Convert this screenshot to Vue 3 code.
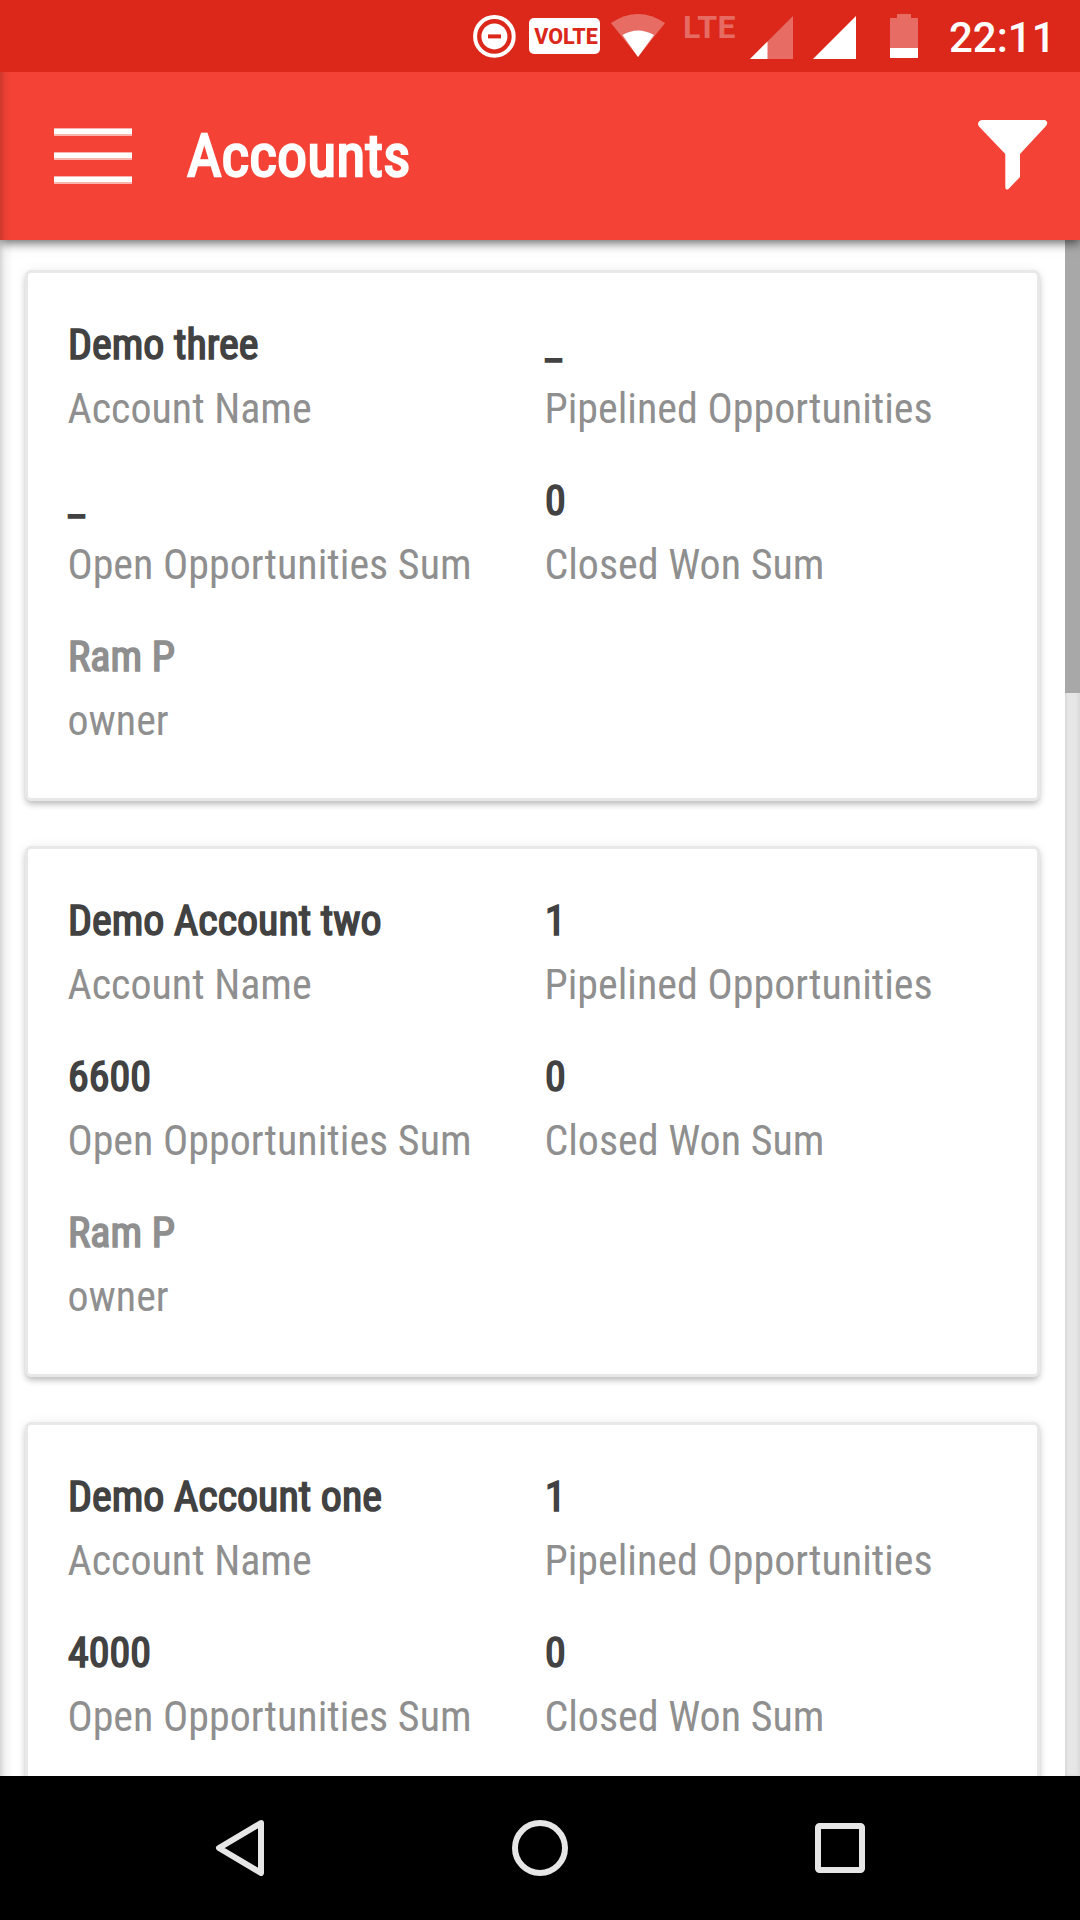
<script setup>
import { ref } from 'vue';

const accounts = ref([
    { name: 'Demo three', pipelined: '_', open: '_', closedWon: '0', owner: 'Ram P' },
    { name: 'Demo Account two', pipelined: '1', open: '6600', closedWon: '0', owner: 'Ram P' },
    { name: 'Demo Account one', pipelined: '1', open: '4000', closedWon: '0' }
]);

const fields = [
    { key: 'name', label: 'Account Name' },
    { key: 'pipelined', label: 'Pipelined Opportunities' },
    { key: 'open', label: 'Open Opportunities Sum' },
    { key: 'closedWon', label: 'Closed Won Sum' },
    { key: 'owner', label: 'owner' }
];

const fieldsOf = (account) => fields.filter((field) => field.key in account);
</script>

<template>
    <div class="screen">
        <div class="status-bar">
            <svg class="dnd" width="44" height="44" viewBox="0 0 44 44">
                <circle cx="22.400" cy="22.400" r="19.300" fill="none" stroke="#fff" stroke-width="4" />
                <circle cx="22.400" cy="22.400" r="13" fill="#fff" />
                <rect x="16" y="20.400" width="13" height="4" fill="#dc281b" />
            </svg>
            <span class="volte">VOLTE</span>
            <svg class="wifi" width="54" height="44" viewBox="0 0 54 44">
                <path d="M0 10Q27 -8 54 10L27 44Z" fill="#fff" fill-opacity=".32" />
                <path d="M11.500 22Q27 13 43 22L27 44Z" fill="#fff" />
            </svg>
            <span class="lte">LTE</span>
            <svg class="signal" width="43" height="43" viewBox="0 0 43 43">
                <path d="M0 43L43 0V43Z" fill="#fff" fill-opacity=".32" />
                <path d="M0 43L17.500 25.500V43Z" fill="#fff" />
            </svg>
            <svg class="signal full" width="43" height="43" viewBox="0 0 43 43">
                <path d="M0 43L43 0V43Z" fill="#fff" />
            </svg>
            <svg class="battery" width="28" height="44" viewBox="0 0 28 44">
                <path d="M0 4H7V0H21V4H28V34H0Z" fill="#fff" fill-opacity=".32" />
                <path d="M0 34H28V44H0Z" fill="#fff" />
            </svg>
            <span class="clock">22:11</span>
        </div>

        <div class="app">
            <header class="toolbar">
                <div class="menu">
                    <i></i>
                    <i></i>
                    <i></i>
                </div>
                <h1>Accounts</h1>
                <svg class="filter" width="70" height="70" viewBox="0 0 70 70">
                    <path d="M4 0H66Q69.500 .5 69.200 3.500Q69 5 67.500 6.500L42 34V57L31 68.500Q30 69.700 28.500 69.500Q27.300 69 27.300 67V34L1.500 7Q0 5.500 0 3.500Q.5 .5 4 0Z" fill="#fff" />
                </svg>
            </header>

            <main class="content">
                <div class="list">
                    <section v-for="account in accounts" :key="account.name" class="card">
                        <div v-for="field in fieldsOf(account)" :key="field.key" class="field" :class="field.key">
                            <div class="value">{{ account[field.key] }}</div>
                            <div class="label">{{ field.label }}</div>
                        </div>
                    </section>
                </div>
                <div class="scrollbar">
                    <div class="thumb"></div>
                </div>
            </main>
            <div class="edge-shadow"></div>
        </div>

        <nav class="nav-bar">
            <svg width="56" height="56" viewBox="0 0 56 56">
                <path d="M49 3L7 28L49 53Z" />
            </svg>
            <svg width="56" height="56" viewBox="0 0 56 56">
                <circle cx="28" cy="28" r="25" />
            </svg>
            <svg width="56" height="56" viewBox="0 0 56 56">
                <rect x="6" y="6" width="44" height="44" rx="1.500" />
            </svg>
        </nav>
    </div>
</template>

<style>
body {
    margin: 0;
    overflow: hidden;
}
</style>

<style scoped>
.screen {
    width: 1080px;
    height: 1920px;
    display: flex;
    flex-direction: column;
    overflow: hidden;
    background: #fff;
    font-family: 'Roboto Condensed', Roboto, sans-serif;
    font-stretch: 75%;
}

.status-bar {
    height: 72px;
    flex: none;
    display: flex;
    align-items: flex-start;
    background: #dc281b;
    color: #fff;
    font-family: Roboto, sans-serif;
    font-stretch: 100%;
}

.dnd {
    margin: 14px 0 0 472px;
}

.volte {
    width: 71px;
    height: 36px;
    margin: 18px 0 0 13px;
    padding-left: 3px;
    box-sizing: border-box;
    border-radius: 5px;
    background: #fff;
    color: #dc281b;
    font-size: 21.500px;
    font-weight: 800;
    line-height: 37px;
    text-align: center;
}

.wifi {
    margin: 13px 0 0 11px;
}

.lte {
    width: 56px;
    margin: 11px 0 0 18px;
    color: rgba(255, 255, 255, .32);
    font-size: 32px;
    font-weight: 700;
    letter-spacing: .4px;
    line-height: 33px;
}

.signal {
    margin: 16px 0 0 11px;
}

.signal.full {
    margin-left: 20px;
}

.battery {
    margin: 14px 0 0 34px;
}

.clock {
    margin: 14px 0 0 31px;
    font-size: 42px;
    font-weight: 500;
    line-height: 48px;
}

.app {
    position: relative;
    height: 1704px;
    display: flex;
    flex-direction: column;
    overflow: hidden;
}

.toolbar {
    position: relative;
    z-index: 1;
    height: 168px;
    flex: none;
    display: flex;
    align-items: center;
    padding: 0 32px 0 54px;
    box-sizing: border-box;
    background: #f44336;
    box-shadow: 0 3px 10px rgba(0, 0, 0, .6);
}

.menu {
    width: 78px;
    display: flex;
    flex-direction: column;
    gap: 16px;
}

.menu i {
    height: 5px;
    border: solid rgba(255, 255, 255, .6);
    border-width: 1px 0 2px;
    background: #fff;
    background-clip: padding-box;
}

h1 {
    margin: 0 auto 0 55px;
    color: #fff;
    font-size: 60px;
    font-weight: 400;
    line-height: 70px;
    -webkit-text-stroke: 2.300px #fff;
}

.filter {
    margin-bottom: 2px;
}

.content {
    flex: 1;
    display: flex;
    min-height: 0;
}

.list {
    flex: 1;
    padding: 30px 25px 0;
    overflow: hidden;
}

.card {
    height: 531px;
    margin-bottom: 45px;
    padding: 40px 0 0 40px;
    box-sizing: border-box;
    display: grid;
    grid-template-columns: 477px 1fr;
    grid-auto-rows: 128px;
    row-gap: 28px;
    border: 3px solid #e8e8e8;
    border-radius: 6px;
    box-shadow: 0 4px 6px -1px rgba(0, 0, 0, .25), 0 0 12px rgba(0, 0, 0, .06);
    background: #fff;
}

.value,
.label {
    font-size: 42px;
    line-height: 64px;
    white-space: nowrap;
}

.value {
    color: #424242;
    -webkit-text-stroke: 1.600px #424242;
}

.label {
    margin-left: -.6px;
    color: #8f8f8f;
}

.owner .value {
    color: #8f8f8f;
    -webkit-text-stroke-color: #8f8f8f;
}

.scrollbar {
    width: 15px;
    background: #e6e6e6;
    box-shadow: inset 2px 0 2px rgba(0, 0, 0, .05), inset -2px 0 3px rgba(0, 0, 0, .06);
}

.thumb {
    height: 453px;
    background: #a8a8a8;
}

/* drawer shadow lying over the left edge */
.edge-shadow {
    position: absolute;
    z-index: 2;
    top: 0;
    bottom: 0;
    left: 0;
    width: 14px;
    background: linear-gradient(to right, rgba(0, 0, 0, .16), rgba(0, 0, 0, .05) 5px, transparent 13px);
}

.nav-bar {
    flex: 1;
    display: flex;
    align-items: center;
    justify-content: center;
    gap: 244px;
    background: #000;
}

.nav-bar svg {
    fill: none;
    stroke: #e6e6e6;
    stroke-width: 6;
    stroke-linejoin: round;
}
</style>
